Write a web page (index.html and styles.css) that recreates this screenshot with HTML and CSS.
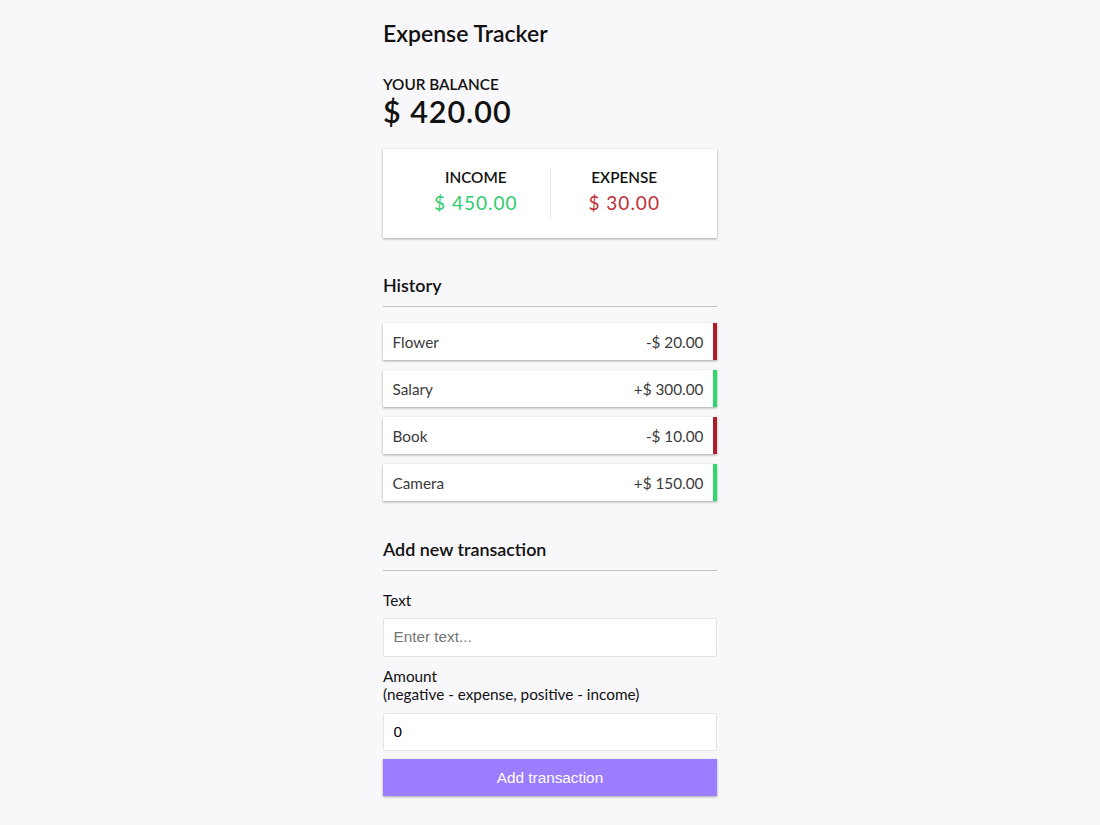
FILE: index.html
```html
<!DOCTYPE html>
<html lang="en">
<head>
<meta charset="UTF-8">
<title>Expense Tracker</title>
<link rel="stylesheet" href="styles.css">
</head>
<body>
<div class="container">
  <h2 class="title">Expense Tracker</h2>
  <h4 class="caps">Your Balance</h4>
  <h1 class="balance">$ 420.00</h1>
  <div class="inc-exp">
    <div class="inc-exp-col divider">
      <h4 class="caps">Income</h4>
      <p class="money plus">$ 450.00</p>
    </div>
    <div class="inc-exp-col">
      <h4 class="caps">Expense</h4>
      <p class="money minus">$ 30.00</p>
    </div>
  </div>
  <h3 class="section">History</h3>
  <ul class="list">
    <li class="item minus"><span>Flower</span><span>-$ 20.00</span></li>
    <li class="item plus"><span>Salary</span><span>+$ 300.00</span></li>
    <li class="item minus"><span>Book</span><span>-$ 10.00</span></li>
    <li class="item plus"><span>Camera</span><span>+$ 150.00</span></li>
  </ul>
  <h3 class="section section-add">Add new transaction</h3>
  <form class="form">
    <div class="form-control">
      <label class="label" for="text">Text</label>
      <input class="field" type="text" id="text" placeholder="Enter text...">
    </div>
    <div class="form-control">
      <label class="label" for="amount">Amount <br>(negative - expense, positive - income)</label>
      <input class="field" type="number" id="amount" value="0">
    </div>
    <button class="btn" type="button">Add transaction</button>
  </form>
</div>
</body>
</html>
```

FILE: styles.css
```css
* {
  box-sizing: border-box;
}

body {
  margin: 0;
  background-color: #f8f7fa;
  font-family: Lato, "Noto Sans", sans-serif;
  color: #000;
}

.container {
  width: 334px;
  margin: 0 auto;
  padding-top: 20px;
}

.title {
  font-size: 23px;
  font-weight: 600;
  margin: 0 0 27.4px;
  line-height: 1.2;
  color: #111;
}

.caps {
  margin: 0;
  font-size: 15.3px;
  font-weight: 600;
  text-transform: uppercase;
  line-height: 1.2;
  color: #111;
}

.balance {
  margin: 0;
  font-size: 30.5px;
  font-weight: 600;
  letter-spacing: 0.95px;
  line-height: 1.2;
  color: #111;
}

.inc-exp {
  background-color: #fff;
  box-shadow: 0 1px 3px rgba(0, 0, 0, 0.12), 0 1px 2px rgba(0, 0, 0, 0.24);
  padding: 19.1px;
  display: flex;
  justify-content: space-between;
  margin: 19.1px 0;
}

.inc-exp-col {
  flex: 1;
  text-align: center;
}

.divider {
  border-right: 1px solid #e6e6e6;
}

.money {
  font-size: 19.1px;
  letter-spacing: 0.95px;
  margin: 5.8px 0 3.8px;
  line-height: 1.2;
}

.money.plus {
  color: #2ecc71;
}

.money.minus {
  color: #c0303a;
}

.section {
  font-size: 17.9px;
  font-weight: 600;
  line-height: 1.2;
  border-bottom: 1px solid #c4c4c4;
  padding-bottom: 9.55px;
  margin: 37.2px 0 9.55px;
  color: #111;
}

.list {
  list-style-type: none;
  padding: 0;
  margin: 15.3px 0 38.2px;
}

.item {
  background-color: #fff;
  box-shadow: 0 1px 3px rgba(0, 0, 0, 0.12), 0 1px 2px rgba(0, 0, 0, 0.24);
  color: #3a3a3a;
  display: flex;
  justify-content: space-between;
  padding: 10px 9.55px 9.1px;
  margin: 9.55px 0;
  font-size: 15.3px;
  line-height: 1.2;
}

.item.plus {
  border-right: 4.8px solid #2ed86c;
}

.item.minus {
  border-right: 4.8px solid #b01c28;
}

.form {
  margin: 0;
}

.label {
  display: inline-block;
  margin: 10px 0 9.1px;
  font-size: 15.3px;
  line-height: 1.2;
  color: #111;
}

.form-control {
  font-size: 15.3px;
  line-height: 1.2;
}

.field {
  border: 1px solid #e4e4e4;
  border-radius: 2px;
  display: block;
  font-family: "Liberation Sans", Arial, sans-serif;
  font-size: 15.3px;
  line-height: 17.6px;
  padding: 9.1px 9.55px 10px;
  width: 100%;
  background: #fff;
  color: #000;
  outline: none;
}

.field::placeholder {
  color: #757575;
}

.btn {
  cursor: pointer;
  background-color: #9c7dff;
  box-shadow: 0 1px 3px rgba(0, 0, 0, 0.12), 0 1px 2px rgba(0, 0, 0, 0.24);
  color: #fff;
  border: 0;
  display: block;
  font-family: "Liberation Sans", Arial, sans-serif;
  font-size: 15.3px;
  line-height: 17.6px;
  margin: 8px 0 28.6px;
  padding: 9.55px 9.55px 9.1px;
  width: 100%;
}
```
